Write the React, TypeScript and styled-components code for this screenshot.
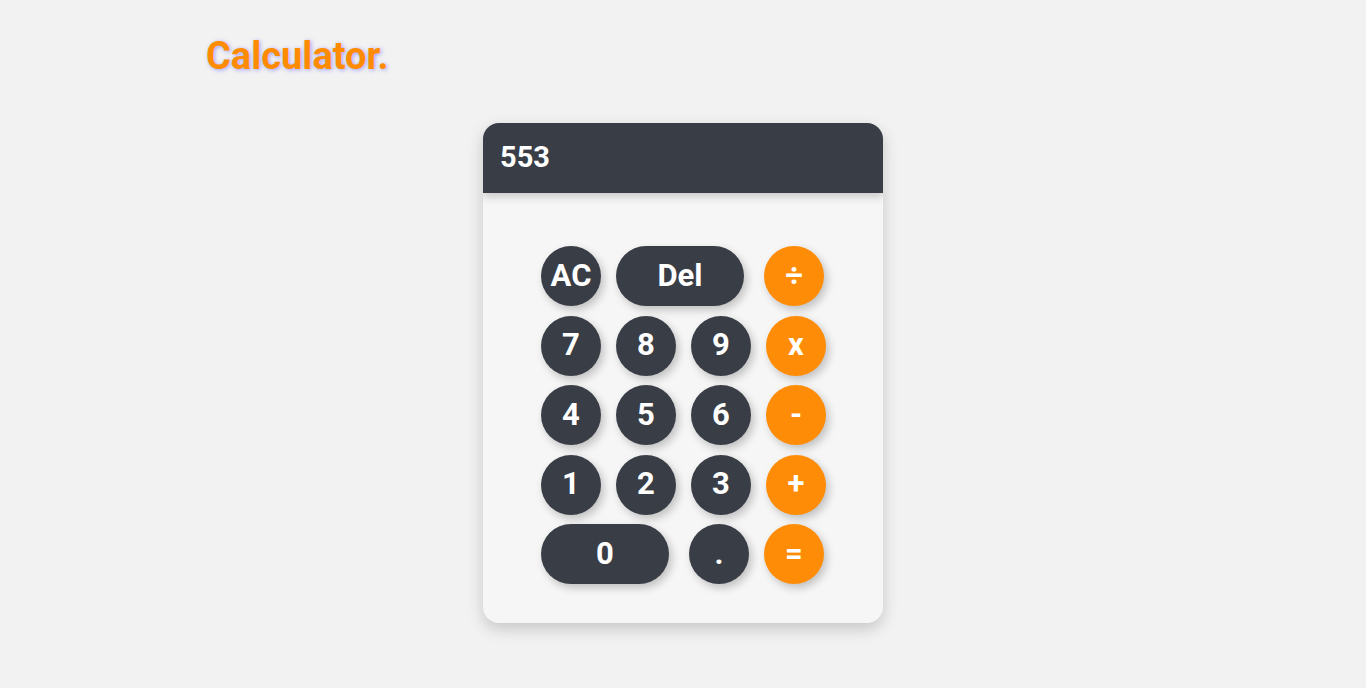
import React from "react";
import styled, { createGlobalStyle } from "styled-components";

const Global = createGlobalStyle`
  html, body { margin: 0; padding: 0; background: #f2f2f2; }
  body { font-family: Roboto, "Liberation Sans", sans-serif; }
`;

const Page = styled.div`
  min-height: 688px;
  display: flex;
  flex-direction: column;
`;

const Title = styled.h1`
  margin: 0;
  padding: 34px 0 0 206px;
  font-size: 38px;
  line-height: 44px;
  font-weight: 700;
  color: #ff8c00;
  text-shadow: 1px 1px 4px rgba(90, 90, 255, 0.55);
`;

const Card = styled.div`
  width: 400px;
  margin: 45px auto 0;
  background: #f6f6f6;
  border-radius: 16px;
  box-shadow: 0 6px 16px rgba(0, 0, 0, 0.18);
  overflow: hidden;
`;

const Display = styled.div`
  height: 70px;
  box-sizing: border-box;
  padding: 0 0 2px 17px;
  display: flex;
  align-items: center;
  background: #393d46;
  color: #ffffff;
  font-size: 29px;
  font-weight: 700;
  box-shadow: 0 4px 8px rgba(0, 0, 0, 0.18);
  position: relative;
`;

const Keys = styled.div`
  display: flex;
  flex-direction: column;
  gap: 9.5px;
  padding: 53px 0 39px 58px;
`;

const Row = styled.div`
  display: flex;
  gap: 15px;
`;

const Key = styled.button<{ $wide?: boolean; $orange?: boolean; $ml?: number }>`
  width: ${(p) => (p.$wide ? 128 : 60)}px;
  height: 60px;
  margin-left: ${(p) => p.$ml ?? 0}px;
  border: none;
  border-radius: 30px;
  padding: 0 0 2px;
  display: flex;
  align-items: center;
  justify-content: center;
  background: ${(p) => (p.$orange ? "#ff8c06" : "#393d46")};
  color: #ffffff;
  font-family: Roboto, "Liberation Sans", sans-serif;
  font-size: 31px;
  font-weight: 700;
  box-shadow: 3px 4px 8px rgba(0, 0, 0, 0.22);
  cursor: pointer;
`;

export default function App() {
  return (
    <Page>
      <Global />
      <Title>Calculator.</Title>
      <Card>
        <Display>553</Display>
        <Keys>
          <Row>
            <Key>AC</Key>
            <Key $wide>Del</Key>
            <Key $orange $ml={5}>÷</Key>
          </Row>
          <Row>
            <Key>7</Key>
            <Key>8</Key>
            <Key>9</Key>
            <Key $orange>x</Key>
          </Row>
          <Row>
            <Key>4</Key>
            <Key>5</Key>
            <Key>6</Key>
            <Key $orange>-</Key>
          </Row>
          <Row>
            <Key>1</Key>
            <Key>2</Key>
            <Key>3</Key>
            <Key $orange>+</Key>
          </Row>
          <Row>
            <Key $wide>0</Key>
            <Key $ml={5}>.</Key>
            <Key $orange>=</Key>
          </Row>
        </Keys>
      </Card>
    </Page>
  );
}
